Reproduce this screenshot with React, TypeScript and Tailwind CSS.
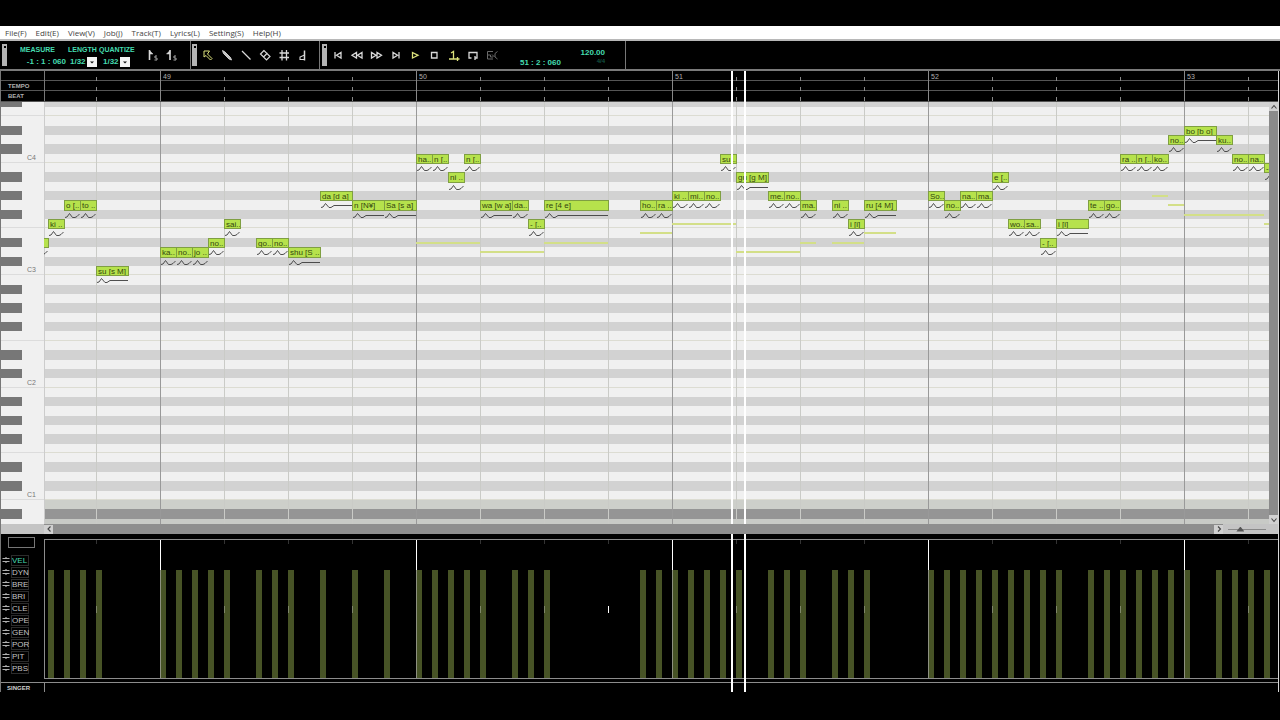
import React from "react";

type Note = [start: number, row: number, length: number, lyric: string];
type Guide = [start: number, row: number, length: number];

// one sixteenth is 16px wide; measure 49 starts 116px into the roll
const STEP = 16;
const ORIGIN = 116;
const ROW_PITCH = 9.36;
const FIRST_ROW = -6;
const LAST_ROW = 39;

const toX = (t: number) => ORIGIN + t * STEP;
// row 0 is C4, rows count down in semitones
const rowTop = (row: number) => Math.max(0, Math.round(51.6 + row * ROW_PITCH));
const rowHeight = (row: number) => rowTop(row + 1) - rowTop(row);

const rows = Array.from({ length: LAST_ROW - FIRST_ROW + 1 }, (_, i) => FIRST_ROW + i);
const pitchClass = (row: number) => (((12 - row) % 12) + 12) % 12;
const isBlack = (row: number) => [1, 3, 6, 8, 10].includes(pitchClass(row));
const hasLine = (row: number) => [0, 5].includes(pitchClass(row));

const beats = Array.from({ length: 22 }, (_, i) => -4 + i * 4);
const measures = [49, 50, 51, 52, 53];
const isMeasure = (t: number) => t % 16 === 0;

const notes: Note[] = [
  [-8, 9, 1, ""],
  [-7, 7, 1, "ki .."],
  [-6, 5, 1, "o [.."],
  [-5, 5, 1, "to .."],
  [-4, 12, 2, "su [s M]"],
  [0, 10, 1, "ka.."],
  [1, 10, 1, "no.."],
  [2, 10, 1, "jo .."],
  [3, 9, 1, "no.."],
  [4, 7, 1, "sai.."],
  [6, 9, 1, "go.."],
  [7, 9, 1, "no.."],
  [8, 10, 2, "shu [S .."],
  [10, 4, 2, "da [d a]"],
  [12, 5, 2, "n [N¥]"],
  [14, 5, 2, "Sa [s a]"],
  [16, 0, 1, "ha.."],
  [17, 0, 1, "n [.."],
  [18, 2, 1, "ni .."],
  [19, 0, 1, "n [.."],
  [20, 5, 2, "wa [w a]"],
  [22, 5, 1, "da.."],
  [23, 7, 1, "- [.."],
  [24, 5, 4, "re [4 e]"],
  [30, 5, 1, "ho.."],
  [31, 5, 1, "ra .."],
  [32, 4, 1, "ki .."],
  [33, 4, 1, "mi.."],
  [34, 4, 1, "no.."],
  [35, 0, 1, "su .."],
  [36, 2, 2, "gu [g M]"],
  [38, 4, 1, "me.."],
  [39, 4, 1, "no.."],
  [40, 5, 1, "ma.."],
  [42, 5, 1, "ni .."],
  [43, 7, 1, "i [i]"],
  [44, 5, 2, "ru [4 M]"],
  [48, 4, 1, "So.."],
  [49, 5, 1, "no.."],
  [50, 4, 1, "na.."],
  [51, 4, 1, "ma.."],
  [52, 2, 1, "e [.."],
  [53, 7, 1, "wo.."],
  [54, 7, 1, "sa.."],
  [55, 9, 1, "- [.."],
  [56, 7, 2, "i [i]"],
  [58, 5, 1, "te .."],
  [59, 5, 1, "go.."],
  [60, 0, 1, "ra .."],
  [61, 0, 1, "n [.."],
  [62, 0, 1, "ko.."],
  [63, -2, 1, "no.."],
  [64, -3, 2, "bo [b o]"],
  [66, -2, 1, "ku.."],
  [67, 0, 1, "no.."],
  [68, 0, 1, "na.."],
  [69, 1, 1, "-"],
];

// pitch range of the track lying underneath
const guides: Guide[] = [
  [16, 9, 4],
  [20, 10, 4],
  [24, 9, 4],
  [30, 8, 2],
  [32, 7, 4],
  [36, 10, 4],
  [40, 9, 1],
  [42, 9, 2],
  [44, 8, 2],
  [62, 4, 1],
  [63, 5, 1],
  [64, 6, 5],
  [69, 7, 1],
];

const menus = ["File(F)", "Edit(E)", "View(V)", "Job(J)", "Track(T)", "Lyrics(L)", "Setting(S)", "Help(H)"];
const params = ["VEL", "DYN", "BRE", "BRI", "CLE", "OPE", "GEN", "POR", "PIT", "PBS"];

const keyColor = (row: number) => (isBlack(row) ? "bg-[#d2d2d2]" : "bg-[#f0f0f0]");

const laneColor = (row: number) => {
  if (row === 37) return "bg-[#cdcfca]";
  if (row === 38) return "bg-[#959595]";
  if (row === 39) return "bg-[#c8cac6]";
  return keyColor(row);
};

const Icon = ({ children }: { children: React.ReactNode }) => (
  <svg viewBox="0 0 14 14" className="size-[14px]" fill="none" stroke="currentColor" strokeWidth="1.3">
    {children}
  </svg>
);

const ToolButton = ({
  label,
  tone = "text-[#d8d8d8]",
  children,
}: {
  label: string;
  tone?: string;
  children: React.ReactNode;
}) => (
  <button type="button" aria-label={label} className={`flex w-[19px] shrink-0 items-center justify-center ${tone}`}>
    <Icon>{children}</Icon>
  </button>
);

const Handle = () => (
  <div className="flex h-[22px] w-[5px] shrink-0 justify-center bg-[#b4b4b4] pt-[2px]">
    <span className="size-[2px] bg-black" />
  </div>
);

const Field = ({
  id,
  label,
  width,
  indent,
}: {
  id: string;
  label: string;
  width: string;
  indent: string;
}) => (
  <div className={`flex flex-col gap-[4px] ${width}`}>
    <label htmlFor={id} className="text-[7px] leading-[8px]">
      {label}
    </label>
    <div className={`relative flex h-[8px] w-[27px] items-center ${indent}`}>
      <select id={id} defaultValue="1/32" className="w-[27px] appearance-none bg-black text-[8px] leading-[8px] font-bold">
        <option>1/32</option>
      </select>
      <svg viewBox="0 0 10 10" className="pointer-events-none absolute right-0 h-[10px] w-[10px]">
        <rect width="10" height="10" fill="#f4f4f4" />
        <path d="M3 4.500h4L5 6.500z" fill="#111" />
      </svg>
    </div>
  </div>
);

const MenuBar = () => (
  <nav className="flex h-[13px] items-center gap-[9px] bg-white pl-[5px] font-['Open_Sans',sans-serif] text-[8px] leading-[12px] text-[#444]">
    {menus.map((menu) => (
      <button key={menu} type="button">
        {menu}
      </button>
    ))}
  </nav>
);

const Toolbar = () => (
  <div className="flex h-[32px] border-t-2 border-b-2 border-t-[#b8b8b8] border-b-[#7a7a7a] bg-black text-[#45dcb0]">
    <div className="flex w-[191px] shrink-0 items-center border-r border-[#777] pl-[2px]">
      <Handle />
      <div className="ml-[13px] flex w-[48px] flex-col gap-[4px] pt-px text-[7px] leading-[8px] font-bold">
        <span>MEASURE</span>
        <span className="pr-[2px] text-right text-[8px] whitespace-pre">-1 : 1 : 060</span>
      </div>
      <div className="flex pt-px font-bold">
        <Field id="length" label="LENGTH" width="w-[31px]" indent="ml-[2px]" />
        <Field id="quantize" label="QUANTIZE" width="w-[43px]" indent="ml-[4px]" />
      </div>
      <div className="flex">
        <ToolButton label="Snap start">
          <path d="M4.500 2v10" strokeWidth="1.600" />
          <path d="M4.500 2.500L8 6H4.500z" fill="currentColor" strokeWidth="0.500" />
          <path d="M12 8h-2v2h2v2H9.500" stroke="#aaa" strokeWidth="1" />
        </ToolButton>
        <ToolButton label="Snap length">
          <path d="M6 2v10" strokeWidth="1.600" />
          <path d="M6 2.500L2.500 6H6z" fill="currentColor" strokeWidth="0.500" />
          <path d="M12 8h-2v2h2v2H9.500" stroke="#aaa" strokeWidth="1" />
        </ToolButton>
      </div>
    </div>
    <div className="flex w-[129px] shrink-0 items-center border-r border-[#777] pl-px">
      <Handle />
      <span className="w-px" />
      <ToolButton label="Pointer" tone="text-[#dce27c]">
        <path d="M3 3v6l2-1.500 4.500 4.500 1.500-1.500L6.500 6 8.500 3z" strokeWidth="1" />
      </ToolButton>
      <ToolButton label="Pencil">
        <path d="M2.500 2.500l1 3 5.500 5.500 2.500 1-1-2.500-5.500-5.500z" fill="#c4c4c4" strokeWidth="0.900" />
      </ToolButton>
      <ToolButton label="Line">
        <path d="M3 3l8.500 8.500" />
      </ToolButton>
      <ToolButton label="Eraser">
        <path d="M6 2.500L2.500 6l6 6L12 8.500zM5.500 9l4-4" strokeWidth="1.200" />
      </ToolButton>
      <ToolButton label="Grid">
        <path d="M5 2v10.500M9.500 2v10.500M2.500 5H12M2.500 9.500H12" />
      </ToolButton>
      <ToolButton label="Note">
        <path d="M8.500 2.500v10" strokeWidth="1.500" />
        <path d="M8.500 7L4 9v2.500h4" strokeWidth="1.100" />
      </ToolButton>
    </div>
    <div className="flex w-[306px] shrink-0 items-center border-r border-[#777] pl-[2px]">
      <Handle />
      <span className="w-px" />
      <ToolButton label="To start">
        <path d="M4 4v6.500M10 4.500v5.500L5.500 7.300z" />
      </ToolButton>
      <ToolButton label="Rewind">
        <path d="M6.500 4.500V10L2 7.300zM12 4.500V10L7.500 7.300z" />
      </ToolButton>
      <ToolButton label="Fast forward">
        <path d="M2.500 4.500V10L7 7.300zM8 4.500V10l4.500-2.700z" />
      </ToolButton>
      <span className="w-px" />
      <ToolButton label="To end">
        <path d="M4 4.500V10l4.500-2.700zM10 4v6.500" />
      </ToolButton>
      <ToolButton label="Play" tone="text-[#dce27c]">
        <path d="M4.500 4.500V10L10 7.300z" />
      </ToolButton>
      <ToolButton label="Stop">
        <path d="M4.500 4.500H10V10H4.500z" />
      </ToolButton>
      <span className="w-px" />
      <ToolButton label="Follow song position" tone="text-[#dce27c]">
        <path d="M4 5l2.500-1.500V11M2 11h10.500M10.500 9v4" />
      </ToolButton>
      <ToolButton label="Loop">
        <path d="M5.500 10H3V4.500h8V10H9M9 8v4" />
      </ToolButton>
      <ToolButton label="Effects" tone="text-[#6a6a6a]">
        <path d="M8 3.500H2.500v7.500H8M2.500 7h3v2h2.500M7 6.500L9.500 9M12.500 3.500L10 5.500V9l2.500 2" strokeWidth="1" />
      </ToolButton>
      <span className="mt-[16px] ml-[19px] w-[58px] text-[8px] leading-[8px] font-bold whitespace-pre">51 : 2 : 060</span>
      <div className="flex w-[27px] flex-col pt-[4px] text-right text-[8px] leading-[8px] font-bold">
        <span>120.00</span>
        <span className="text-[6px] leading-[8px] text-[#145443]">4/4</span>
      </div>
    </div>
  </div>
);

const Ruler = () => (
  <div className="flex h-[31px] border-b border-[#555] bg-black text-[#b0b0b0]">
    <div className="flex w-[43px] shrink-0 flex-col text-[6px] leading-[10px] font-bold">
      <span className="h-[10px] border-b border-[#555]" />
      <span className="h-[10px] border-b border-[#555] pl-[7px]">TEMPO</span>
      <span className="h-[10px] pl-[7px]">BEAT</span>
    </div>
    <div className="relative flex min-w-0 flex-1 flex-col overflow-hidden border-l border-[#777]">
      <span className="h-[10px] border-b border-[#555]" />
      <span className="h-[10px] border-b border-[#555]" />
      {beats.map((t) =>
        isMeasure(t) ? (
          <span key={t} className="absolute top-0 h-[30px] w-px bg-[#888]" style={{ left: toX(t) - 1 }} />
        ) : (
          <span
            key={t}
            className="absolute top-[6px] flex h-[24px] w-px flex-col justify-between"
            style={{ left: toX(t) - 1 }}
          >
            <i className="h-[4px] bg-[#888]" />
            <i className="h-[4px] bg-[#888]" />
            <i className="h-[4px] bg-[#888]" />
          </span>
        ),
      )}
      {measures.map((n, i) => (
        <span key={n} className="absolute top-[1px] text-[7px] leading-[9px]" style={{ left: toX(i * 16) + 2 }}>
          {n}
        </span>
      ))}
    </div>
  </div>
);

const Keyboard = () => (
  <div className="flex w-[43px] shrink-0 flex-col overflow-hidden bg-[#f0f0f0]">
    {rows.map((row) => (
      <div
        key={row}
        className={`flex shrink-0 items-center ${hasLine(row) ? "border-b border-[#dcdcdc]" : ""}`}
        style={{ height: rowHeight(row) }}
      >
        <span className={`h-full w-[21px] ${isBlack(row) ? "bg-[#777]" : ""}`} />
        {pitchClass(row) === 0 && (
          <span className="pl-[5px] text-[7px] leading-[8px] text-[#777]">C{4 - row / 12}</span>
        )}
      </div>
    ))}
  </div>
);

const PitchCurve = ({ width }: { width: number }) => (
  <svg width={width} height="9" className="block" fill="none" stroke="#3c3c3c" strokeWidth="0.9">
    <path
      d={
        width > STEP
          ? `M1 6.500l2-.5 2.500-3.500 3.500 4h2l3-2H${width}`
          : "M1 6.500l2-.5 2.500-3.500 3 4H11l2-1 2.500-2.500"
      }
    />
  </svg>
);

const NoteBlock = ({ note }: { note: Note }) => {
  const [start, row, length, lyric] = note;
  const width = length * STEP;

  return (
    <div className="absolute" style={{ left: toX(start), top: rowTop(row), width: width + 1 }}>
      <div
        className="overflow-hidden border border-[#7f9f42] bg-[#b6e24c] pl-px text-[8px] leading-[9px] whitespace-nowrap text-[#33450f]"
        style={{ height: rowHeight(row) + 1 }}
      >
        {lyric}
      </div>
      <PitchCurve width={width} />
    </div>
  );
};

const PianoRoll = () => (
  <div className="relative min-w-0 flex-1 overflow-hidden">
    {rows.map((row) => (
      <div
        key={row}
        className={`${laneColor(row)} ${hasLine(row) ? "border-b border-[#dcdcd2]" : ""}`}
        style={{ height: rowHeight(row) }}
      />
    ))}
    {beats.map((t) => (
      <span
        key={t}
        className={`absolute inset-y-0 w-px ${isMeasure(t) ? "bg-[#999]" : "bg-[#cacbc7]"}`}
        style={{ left: toX(t) }}
      />
    ))}
    <span className="absolute inset-y-0 left-0 w-px bg-[#ccc]" />
    {guides.map(([start, row, length]) => (
      <span
        key={start}
        className="absolute h-[2px] bg-[#d3df88]"
        style={{ left: toX(start), top: rowTop(row) + 4, width: length * STEP }}
      />
    ))}
    {notes.map((note) => (
      <NoteBlock key={note[0]} note={note} />
    ))}
  </div>
);

const ScrollButton = ({ label, d }: { label: string; d: string }) => (
  <button type="button" aria-label={label} className="flex size-[9px] shrink-0 items-center justify-center bg-[#d0d0d0]">
    <svg viewBox="0 0 8 8" className="size-[8px]" fill="none" stroke="#444" strokeWidth="1.1">
      <path d={d} />
    </svg>
  </button>
);

const HorizontalScroll = () => (
  <div className="relative z-20 flex h-[10px] items-center bg-[#8e8e8e]">
    <span className="h-full w-[43px] bg-[#c4c4c4]" />
    <ScrollButton label="Scroll left" d="M5.500 1.500L3 4l2.500 2.500" />
    <span className="flex-1" />
    <ScrollButton label="Scroll right" d="M3 1.500L5.500 4 3 6.500" />
    <div className="flex h-full w-[55px] items-center bg-[#c4c4c4] pl-[5px]">
      <input
        type="range"
        aria-label="Horizontal zoom"
        defaultValue={28}
        className="h-px w-[38px] appearance-none bg-[#888] [&::-webkit-slider-thumb]:h-[5px] [&::-webkit-slider-thumb]:w-[8px] [&::-webkit-slider-thumb]:appearance-none [&::-webkit-slider-thumb]:bg-[#555] [&::-webkit-slider-thumb]:[clip-path:polygon(50%_0,100%_100%,0_100%)]"
      />
    </div>
  </div>
);

const ParameterList = () => (
  <div className="flex w-[43px] shrink-0 flex-col pt-[3px]">
    <span className="ml-[7px] h-[11px] w-[27px] border border-[#777]" />
    <div className="mt-[6px] flex flex-col">
      {params.map((param) => (
        <button key={param} type="button" className="flex h-[12px] items-center gap-px pl-px">
          <svg viewBox="0 0 8 8" className="size-[8px]" fill="none" stroke="#b0b0b0">
            <path d="M0.500 2.500h7M0.500 5.500h7" />
            <path d="M2.500 2.500q1.500-2 3 0M2.500 5.500q1.500 2 3 0" strokeWidth="0.900" />
          </svg>
          <span
            className={`h-[11px] w-[18px] border border-[#2c2c2c] text-left text-[8px] leading-[10px] ${
              param === "VEL" ? "text-[#45dcb0]" : "text-[#c4c4c4]"
            }`}
          >
            {param}
          </span>
        </button>
      ))}
    </div>
  </div>
);

const VelocityPane = () => (
  <div className="relative mt-[5px] h-[140px] min-w-0 flex-1 overflow-hidden border-t border-b border-l border-[#8c8c8c]">
    {notes.slice(1).map(([start]) => (
      <span
        key={start}
        className="absolute bottom-0 h-[108px] w-[6px] bg-[#475326]"
        style={{ left: toX(start) - 1 }}
      />
    ))}
    {beats.map((t) =>
      isMeasure(t) ? (
        <React.Fragment key={t}>
          <span className="absolute inset-y-0 w-px bg-[#8d9080]" style={{ left: toX(t) - 1 }} />
          <span className="absolute top-0 h-[30px] w-px bg-white" style={{ left: toX(t) - 1 }} />
        </React.Fragment>
      ) : (
        <React.Fragment key={t}>
          <span className="absolute top-0 h-[4px] w-px bg-[#333]" style={{ left: toX(t) - 1 }} />
          <span
            className={`absolute top-[66px] h-[7px] w-px ${t === 28 ? "bg-white" : "bg-[#7d8568]"}`}
            style={{ left: toX(t) - 1 }}
          />
        </React.Fragment>
      ),
    )}
  </div>
);

const App = () => (
  <div className="min-h-screen w-full overflow-hidden bg-black pt-[26px] font-['Liberation_Sans',Arial,sans-serif]">
    <MenuBar />
    <Toolbar />
    <div className="relative mr-px border-r border-l border-r-[#d8d8d8] border-l-[#777]">
      <Ruler />
      <div className="flex h-[422px]">
        <Keyboard />
        <PianoRoll />
        <div className="flex w-[9px] shrink-0 flex-col justify-between bg-[#8a8a8a]">
          <ScrollButton label="Scroll up" d="M1.500 5.500L4 2.500l2.500 3" />
          <ScrollButton label="Scroll down" d="M1.500 2.500L4 5.500l2.500-3" />
        </div>
      </div>
      <HorizontalScroll />
      <div className="flex">
        <ParameterList />
        <VelocityPane />
      </div>
      <div className="mt-[3px] flex h-[10px] border-t border-[#8c8c8c] text-[#d0d0d0]">
        <span className="w-[43px] pl-[6px] text-[6px] leading-[10px] font-bold">SINGER</span>
        <span className="w-px bg-[#8c8c8c]" />
      </div>
      <span className="absolute inset-y-0 left-[730px] z-10 w-[2px] bg-white" />
      <span className="absolute inset-y-0 left-[743px] z-10 w-[2px] bg-white" />
    </div>
  </div>
);

export default App;
